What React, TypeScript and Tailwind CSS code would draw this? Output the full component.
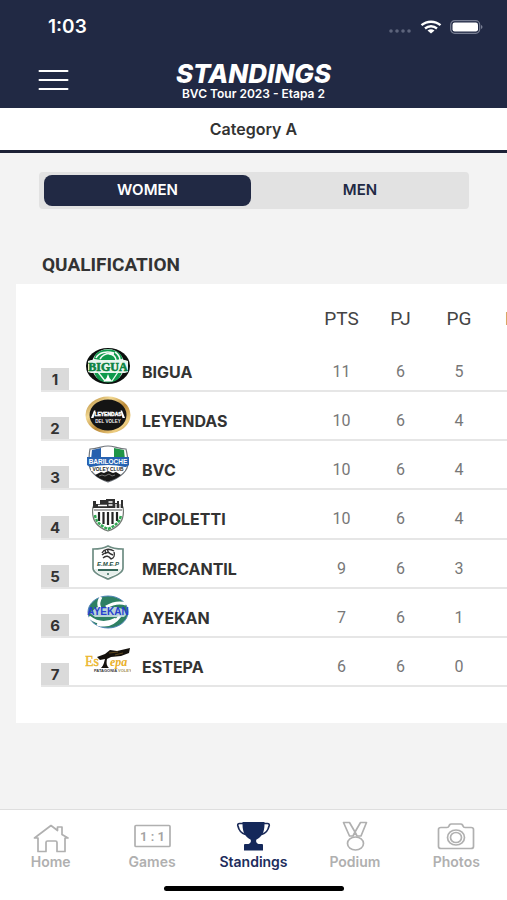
import React from 'react';

const inter = "font-['Inter','Liberation_Sans',sans-serif]";
const roboto = "font-['Roboto','Liberation_Sans',sans-serif]";

const BiguaLogo = () => (
    <svg viewBox="0 0 46 38" className="w-[46px] h-[38px]" aria-hidden="true">
        <ellipse cx="23" cy="19" rx="22" ry="18" fill="#0b0f0d" />
        <ellipse cx="23" cy="18.500" rx="16.500" ry="16.500" fill="#f4faf6" />
        <path d="M9 12C10 5 16 2.500 23 2.500S36 5 37.500 12L23 14Z" fill="#0f9a4c" />
        <path d="M11 11C14 5 22 4 29 6M15 12c3-5 9-6 14-5M24 7c4 0 7 3 7 6M30 5c3 2 5 4 5 8" fill="none" stroke="#f4faf6" strokeWidth="1.600" />
        <path d="M9 25h28C35 32 30 35.500 23 35.500S11 32 9 25Z" fill="#0f9a4c" />
        <path d="M13 25l7 9M33 25l-6 9" stroke="#f4faf6" strokeWidth="1.300" />
        <path d="M23 27l-1.500 4-3 3.500h9l-3-3.500Z" fill="#fff" />
        <path d="M3 14l3-1h34l3 1v11l-3 1H6l-3-1Z" fill="#e9f6ee" />
        <text x="23" y="23.500" textAnchor="middle" fontFamily="Liberation Serif, serif" fontWeight="700" fontSize="12" fill="#0d8442" stroke="#0d8442" strokeWidth="0.600">BIGUA</text>
    </svg>
);

const LeyendasLogo = () => (
    <svg viewBox="0 0 46 38" className="w-[46px] h-[38px]" aria-hidden="true">
        <defs>
            <linearGradient id="gold" x1="0" y1="0" x2="1" y2="1">
                <stop offset="0" stopColor="#a97826" />
                <stop offset="0.300" stopColor="#f3d993" />
                <stop offset="0.550" stopColor="#b98735" />
                <stop offset="0.800" stopColor="#efcf83" />
                <stop offset="1" stopColor="#9c6d22" />
            </linearGradient>
        </defs>
        <ellipse cx="23" cy="19" rx="22.500" ry="18.500" fill="url(#gold)" />
        <ellipse cx="23" cy="19" rx="18.500" ry="15.500" fill="#141414" />
        <path d="M6 22L9 14.500h1.500L8.500 22ZM40 22l-3-7.500H35.500L37.500 22Z" fill="#fff" />
        <text x="23" y="19.500" textAnchor="middle" fontFamily="Liberation Sans, sans-serif" fontWeight="700" fontSize="5" fill="#fff" stroke="#fff" strokeWidth="0.400">LEYENDAS</text>
        <text x="23" y="26.500" textAnchor="middle" fontFamily="Liberation Sans, sans-serif" fontWeight="700" fontSize="4.500" fill="#f0f0f0">DEL VOLEY</text>
    </svg>
);

const BvcLogo = () => (
    <svg viewBox="0 0 46 38" className="w-[46px] h-[38px]" aria-hidden="true">
        <path d="M5 4C12 4 17 1 23 1s11 3 18 3c1 5 2 8 2 14 0 9-9 15-20 19C12 33 4 27 4 18 4 12 4 9 5 4Z" fill="#fff" stroke="#70757b" strokeWidth="1.200" />
        <path d="M7 5l9-2v12H6Z" fill="#2560ae" />
        <path d="M29 3l10 2 1 10H29Z" fill="#1f9547" />
        <path d="M2 12h42v8l-3 2H5l-3-2Z" fill="#2763b2" />
        <path d="M6 22q17-4 34 0v4H6Z" fill="#fff" />
        <text x="23" y="18.500" textAnchor="middle" fontFamily="Liberation Sans, sans-serif" fontWeight="700" fontSize="6.500" fill="#fff">BARILOCHE</text>
        <text x="23" y="25.500" textAnchor="middle" fontFamily="Liberation Sans, sans-serif" fontWeight="700" fontSize="4.800" fill="#222">VOLEY CLUB</text>
        <path d="M10 30l6-3 3 1 4-2 5 2 3-1 5 3c-3 3-8 5-13 6.500C17 35 13 33 10 30Z" fill="#181818" />
        <path d="M14 31l3-1 3 1 4-2 3 2 3-1" fill="none" stroke="#999" strokeWidth="0.700" />
    </svg>
);

const CipolettiLogo = () => (
    <svg viewBox="0 0 46 38" className="w-[46px] h-[38px]" aria-hidden="true">
        <path d="M8 12C6 24 11 32 23 36c12-4 17-12 15-24Z" fill="#fff" stroke="#737873" strokeWidth="1.200" />
        <path d="M8 6h3v3h4V5h6V4h9v4h2V6h2v3h2V5h2v8H8Z" fill="#303030" />
        <path d="M13 10.500h9M23.500 7h4M23.500 10h4M31 9v4M35 9v4" stroke="#fff" strokeWidth="1.300" />
        <path d="M9 15h28" stroke="#555" strokeWidth="1" />
        <path d="M14 17v9M18.500 17v12M23 17v13M27.500 17v12M32 17v9" stroke="#222" strokeWidth="2.200" />
        <path d="M10 20c1 7 6 11 13 14 7-3 12-7 13-14" fill="none" stroke="#31a853" strokeWidth="2.500" strokeDasharray="3 1" />
    </svg>
);

const MercantilLogo = () => (
    <svg viewBox="0 0 46 38" className="w-[46px] h-[38px]" aria-hidden="true">
        <path d="M23 2c5 3 10 3 15 3v19c0 5-8 8-15 11C16 32 8 29 8 24V5c5 0 10 0 15-3Z" fill="#fff" stroke="#6e8d83" strokeWidth="1.700" />
        <path d="M10 25h26v1c-2 3-7 5-13 7-6-2-11-4-13-7Z" fill="#e6efeb" />
        <path d="M17 9c2-4 7-5 12-2M17 11c3-3 7-3 9-1M18 14c3-3 6-2 8 1M29 8c1 3 0 6-3 7M23 5c-1 2 0 4 5 6M20 6l1 4" fill="none" stroke="#333" strokeWidth="1.400" />
        <text x="23" y="22" textAnchor="middle" fontFamily="Liberation Sans, sans-serif" fontStyle="italic" fontWeight="700" fontSize="6" fill="#264f42">E.M.E.P</text>
        <path d="M13 26h20" stroke="#36685a" strokeWidth="2" />
        <path d="M22 30h2" stroke="#36685a" strokeWidth="1.500" />
    </svg>
);

const AyekanLogo = () => (
    <svg viewBox="0 0 46 38" className="w-[46px] h-[38px]" aria-hidden="true">
        <ellipse cx="23" cy="19" rx="20" ry="16" fill="#2e8063" stroke="#4e83b6" strokeWidth="1" />
        <path d="M16 4c-3 5-3 8-1 11M4 24c9 7 18 7 27 2M21 14c7-4 14-5 20-3M12 31c10 3 18-1 23-8" fill="none" stroke="#fff" strokeWidth="3" />
        <path d="M12 14h20l8 3 1 5-2 2H10l-5-4Z" fill="#dce9f5" fillOpacity="0.800" />
        <text x="23" y="22" textAnchor="middle" fontFamily="Liberation Sans, sans-serif" fontWeight="700" fontSize="10" fill="#273fd0">AYEKAN</text>
    </svg>
);

const EstepaLogo = () => (
    <svg viewBox="0 0 46 38" className="w-[46px] h-[38px]" aria-hidden="true">
        <text x="0" y="24" fontFamily="Liberation Serif, serif" fontSize="14" fill="#ecb62c" stroke="#ecb62c" strokeWidth="0.400">Es</text>
        <text x="25" y="24" fontFamily="Liberation Serif, serif" fontStyle="italic" fontSize="12" fontWeight="700" fill="#e9b02a">epa</text>
        <path d="M12 15l8-3 5-4 7 1 13-3-1 5-8 3-10 1-4 2c-1 5 0 7 2 9h-8c3-3 3-6 4-9l-5 1Z" fill="#15110d" />
        <path d="M24 11l9-1M30 13l8-2" stroke="#715725" strokeWidth="0.800" />
        <text x="9" y="29.500" fontFamily="Liberation Sans, sans-serif" fontWeight="700" fontSize="4" fill="#3a3a3a">PATAGONIA <tspan fill="#a79258">VOLEY</tspan></text>
    </svg>
);

const teams = [
    { name: 'BIGUA', logo: <BiguaLogo />, pts: 11, pj: 6, pg: 5 },
    { name: 'LEYENDAS', logo: <LeyendasLogo />, pts: 10, pj: 6, pg: 4 },
    { name: 'BVC', logo: <BvcLogo />, pts: 10, pj: 6, pg: 4 },
    { name: 'CIPOLETTI', logo: <CipolettiLogo />, pts: 10, pj: 6, pg: 4 },
    { name: 'MERCANTIL', logo: <MercantilLogo />, pts: 9, pj: 6, pg: 3 },
    { name: 'AYEKAN', logo: <AyekanLogo />, pts: 7, pj: 6, pg: 1 },
    { name: 'ESTEPA', logo: <EstepaLogo />, pts: 6, pj: 6, pg: 0 },
];

const NavIcon: React.FC<{ children: React.ReactNode }> = ({ children }) => (
    <svg viewBox="0 0 40 34" className="w-10 h-[34px]" fill="none" stroke="#b0b0b0" strokeWidth="1.700" strokeLinejoin="round" aria-hidden="true">
        {children}
    </svg>
);

const tabs = [
    {
        label: 'Home',
        icon: (
            <NavIcon>
                <path d="M3.500 18L20 5.500L26.500 10.500V7H31v7.500L37 18H34v13.500H26V22.500q0-1.500-1.500-1.500h-8Q15 21 15 22.500v9H7V18Z" />
            </NavIcon>
        ),
    },
    {
        label: 'Games',
        icon: (
            <NavIcon>
                <rect x="3" y="5.500" width="35" height="21" rx="1" />
                <text x="20.500" y="21" textAnchor="middle" fontFamily="Roboto, sans-serif" fontSize="13" fill="#a3a3a3" stroke="none">1 : 1</text>
            </NavIcon>
        ),
    },
    {
        label: 'Standings',
        active: true,
        icon: (
            <NavIcon>
                <path d="M10 3.500H6.500q-2 0-1.700 2C6 11 8 13 12.500 14.500M31 3.500h3.500q2 0 1.700 2C35 11 33 13 28.500 14.500" stroke="#1b2a58" />
                <path d="M9.500 2h22v2c0 9-3 13-8 15.500-1 2 0 3.500 2 4.500H29q1 0 1 1v5.500H11V25q0-1 1-1h3.500c2-1 3-2.500 2-4.500C12.500 17 9.500 13 9.500 4Z" fill="#14285a" stroke="none" />
            </NavIcon>
        ),
    },
    {
        label: 'Podium',
        icon: (
            <NavIcon>
                <path d="M8.500 2.500h6L20 12l-2 4h-3.500ZM25.500 2.500h6L26 16h-4l-2-4Z" />
                <ellipse cx="20.500" cy="23.500" rx="8" ry="6.500" />
            </NavIcon>
        ),
    },
    {
        label: 'Photos',
        icon: (
            <NavIcon>
                <path d="M5 7.500h6q1.500 0 2-1.500l.5-1q.5-1 2-1h9q1.500 0 2 1l.5 1q.5 1.500 2 1.500h6q2.500 0 2.500 2v17q0 2-2.500 2H5q-2.500 0-2.500-2v-17q0-2 2.500-2Z" />
                <ellipse cx="20" cy="17.500" rx="8.500" ry="7.500" />
                <ellipse cx="20" cy="17.500" rx="5.500" ry="5" />
            </NavIcon>
        ),
    },
];

const StatusBar = () => (
    <div className="flex items-center justify-between h-[54px] pl-12 pr-6 text-white">
        <span className="text-[19px] font-semibold">1:03</span>
        <div className="flex items-center gap-2">
            <svg viewBox="0 0 24 6" className="w-6 h-[6px] mt-2" fill="#5d647c" aria-hidden="true">
                <circle cx="3" cy="3" r="1.800" />
                <circle cx="9" cy="3" r="1.800" />
                <circle cx="15" cy="3" r="1.800" />
                <circle cx="21" cy="3" r="1.800" />
            </svg>
            <svg viewBox="0 0 22 14" className="w-[22px] h-[14px]" aria-hidden="true">
                <path d="M1.500 5.200C7 .5 15 .5 20.500 5.200M5 8.500C8.500 5.500 13.500 5.500 17 8.500" fill="none" stroke="#fff" strokeWidth="2.400" />
                <path d="M7.500 10.500q3.500-2.500 7 0L11 13.500Z" fill="#fff" />
            </svg>
            <svg viewBox="0 0 33 14" className="w-[33px] h-[14px]" aria-hidden="true">
                <rect x="0.700" y="0.700" width="29" height="12.600" rx="4" fill="none" stroke="#797f94" strokeWidth="1.200" />
                <rect x="2.500" y="2.500" width="25.500" height="9" rx="2.200" fill="#fff" />
                <path d="M31 5v4q1.500-.5 1.500-2T31 5Z" fill="#797f94" />
            </svg>
        </div>
    </div>
);

const App: React.FC = () => {
    return (
        <div className={`min-h-screen flex flex-col bg-[#f3f3f3] text-[#333] overflow-hidden ${inter}`}>
            <header className="bg-[#212944]">
                <StatusBar />
                <div className="grid grid-cols-[1fr_auto_1fr] h-[54px] px-[38px] text-white">
                    <button aria-label="Menu" className="justify-self-start self-start pt-4">
                        <svg viewBox="0 0 31 20" className="w-[31px] h-5" stroke="#fff" strokeWidth="2" strokeLinecap="round" aria-hidden="true">
                            <path d="M1.500 1h28M1.500 10h28M1.500 19h28" />
                        </svg>
                    </button>
                    <div className="text-center pt-2">
                        <h1 className="text-[26px] leading-6 font-extrabold italic">STANDINGS</h1>
                        <p className="text-xs leading-4 font-semibold">BVC Tour 2023 - Etapa 2</p>
                    </div>
                </div>
            </header>

            <div className="h-[45px] bg-white border-b-3 border-[#1c2136] flex items-center justify-center">
                <h2 className="text-base font-semibold">Category A</h2>
            </div>

            <main className="flex-1">
                <div className="mt-[19px] ml-[39px] mr-[38px] h-[37px] py-[3px] pl-[5px] flex rounded bg-[#e2e2e2] text-[15px] font-semibold">
                    <button aria-pressed="true" className="flex-[19] rounded-lg bg-[#212944] text-white">WOMEN</button>
                    <button aria-pressed="false" className="flex-[20] rounded-lg text-[#212944]">MEN</button>
                </div>

                <h3 className={`mt-11 mb-[7px] ml-[42px] text-[19px] leading-6 font-bold ${roboto}`}>QUALIFICATION</h3>

                <section className="ml-4 h-[439px] pl-[25px] bg-white overflow-hidden">
                    <table className="table-fixed w-[505px] h-[403px] border-collapse">
                        <thead>
                            <tr className={`h-[58px] text-[19px] text-[#444] ${roboto}`}>
                                <th className="w-7" aria-label="Position"></th>
                                <th className="w-[73px]" aria-label="Logo"></th>
                                <th aria-label="Team"></th>
                                <th className="w-[59px] pt-3 font-normal">PTS</th>
                                <th className="w-[59px] pt-3 font-normal">PJ</th>
                                <th className="w-[58px] pt-3 font-normal">PG</th>
                                <th className="w-[58px] pt-3 font-normal">PP</th>
                            </tr>
                        </thead>
                        <tbody>
                            {teams.map((team, i) => (
                                <tr key={team.name} className="h-[49px] border-b-2 border-[#e6e6e6]">
                                    <td className="p-0 align-bottom">
                                        <div className="h-[22px] bg-[#dadada] text-center text-[15px] leading-6 font-bold">{i + 1}</div>
                                    </td>
                                    <td className="pl-4 pb-[5px] align-bottom">{team.logo}</td>
                                    <td className="pt-[11px] text-base font-bold">{team.name}</td>
                                    <td className={`pt-[11px] text-center text-base text-[#777] ${roboto}`}>{team.pts}</td>
                                    <td className={`pt-[11px] text-center text-base text-[#777] ${roboto}`}>{team.pj}</td>
                                    <td className={`pt-[11px] text-center text-base text-[#777] ${roboto}`}>{team.pg}</td>
                                    <td></td>
                                </tr>
                            ))}
                        </tbody>
                    </table>
                </section>
            </main>

            <footer className="bg-white border-t border-[#dedede]">
                <nav className="grid grid-cols-5 pt-[10px]">
                    {tabs.map((tab) => (
                        <a
                            key={tab.label}
                            href="#"
                            aria-current={tab.active ? 'page' : undefined}
                            className={`flex flex-col items-center text-sm leading-4 font-semibold ${tab.active ? 'text-[#212c5c]' : 'text-[#b0b0b0]'}`}
                        >
                            {tab.icon}
                            {tab.label}
                        </a>
                    ))}
                </nav>
                <div className="mx-auto mt-4 mb-[9px] w-[180px] h-[5px] rounded-full bg-black"></div>
            </footer>
        </div>
    );
};

export default App;
